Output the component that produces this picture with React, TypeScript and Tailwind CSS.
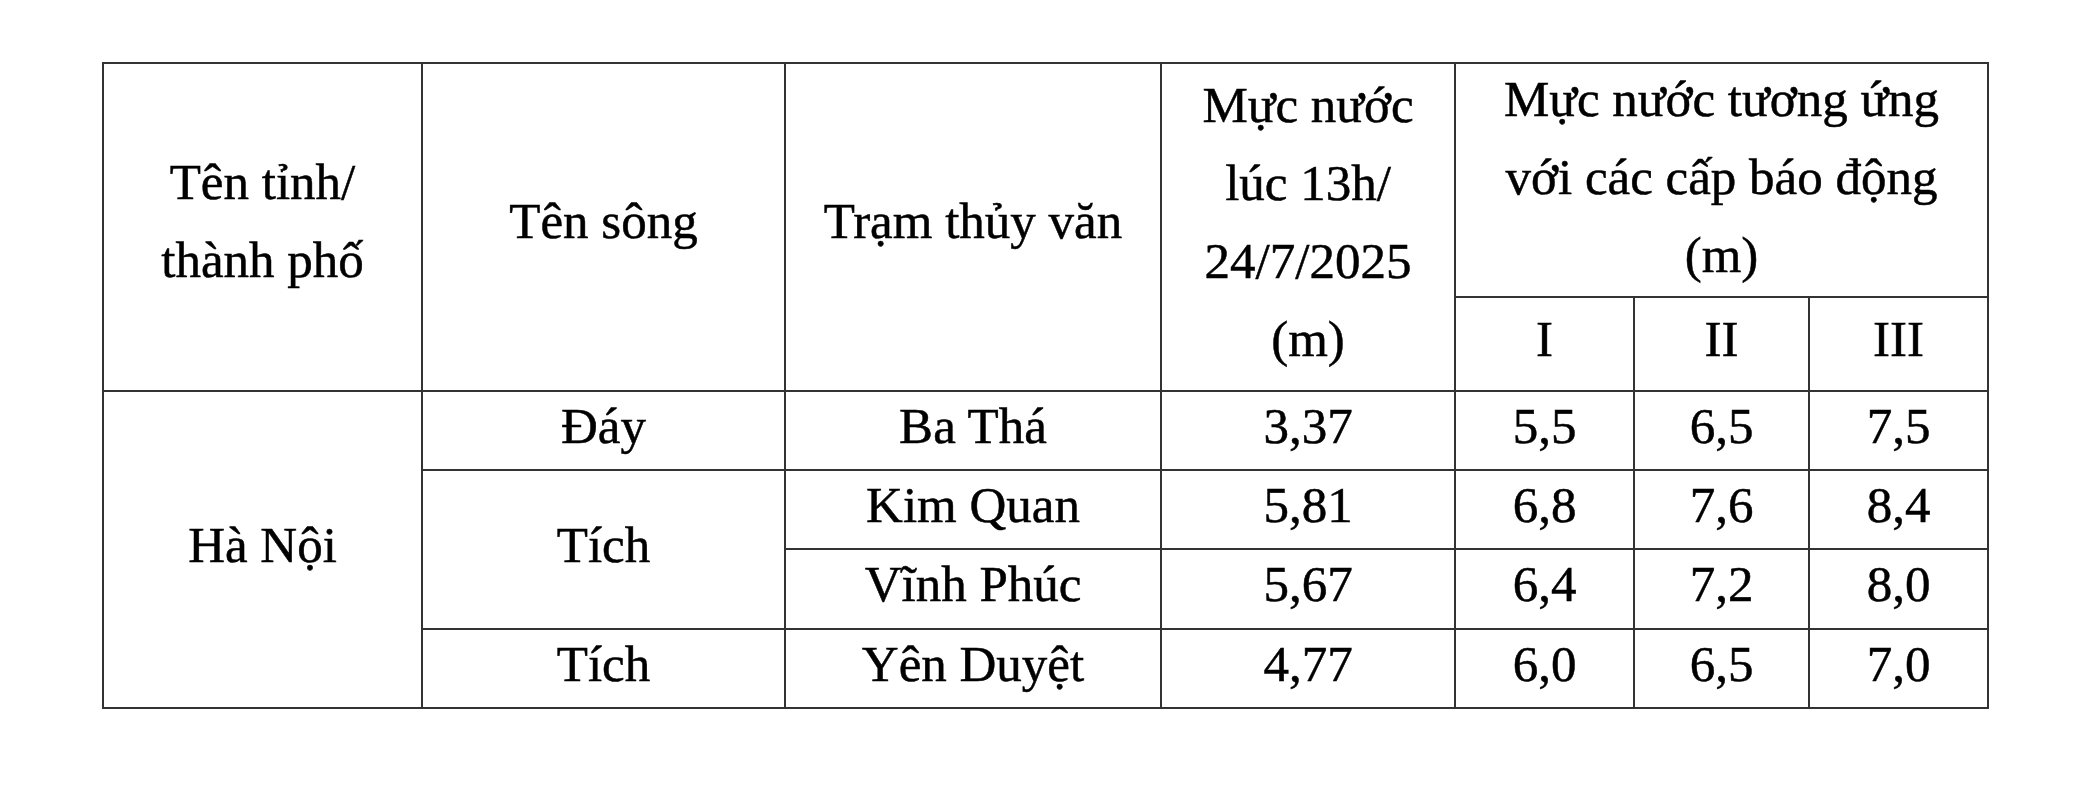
import React from "react";

const cell = "border-2 border-[#333333] text-center align-middle font-normal p-0";

const rows: { river?: { name: string; span: number }; station: string; level: string; a: string; b: string; c: string }[] = [
  { river: { name: "Đáy", span: 1 }, station: "Ba Thá", level: "3,37", a: "5,5", b: "6,5", c: "7,5" },
  { river: { name: "Tích", span: 2 }, station: "Kim Quan", level: "5,81", a: "6,8", b: "7,6", c: "8,4" },
  { station: "Vĩnh Phúc", level: "5,67", a: "6,4", b: "7,2", c: "8,0" },
  { river: { name: "Tích", span: 1 }, station: "Yên Duyệt", level: "4,77", a: "6,0", b: "6,5", c: "7,0" },
];

const heights = ["h-[79px]", "h-[79px]", "h-[80px]", "h-[79px]"];

export default function App() {
  return (
    <div className="w-[2100px] h-[789px] bg-white overflow-hidden pt-[62px] pl-[102px]">
      <table
        className="table-fixed border-collapse w-[1885px] text-black text-[51px] leading-[78px] [-webkit-text-stroke:0.5px_black]"
        style={{ fontFamily: '"Liberation Serif", "Times New Roman", serif' }}
      >
        <colgroup>
          <col className="w-[319px]" />
          <col className="w-[363px]" />
          <col className="w-[376px]" />
          <col className="w-[294px]" />
          <col className="w-[179px]" />
          <col className="w-[175px]" />
          <col className="w-[179px]" />
        </colgroup>
        <thead>
          <tr className="h-[234px]">
            <th rowSpan={2} className={cell}>
              <div className="-mt-[12px]">
                Tên tỉnh/
                <br />
                thành phố
              </div>
            </th>
            <th rowSpan={2} className={cell}>
              <div className="-mt-[12px]">Tên sông</div>
            </th>
            <th rowSpan={2} className={cell}>
              <div className="-mt-[12px]">Trạm thủy văn</div>
            </th>
            <th rowSpan={2} className={cell}>
              <div className="-mt-[10px]">
                Mực nước
                <br />
                lúc 13h/
                <br />
                24/7/2025
                <br />
                (m)
              </div>
            </th>
            <th colSpan={3} className={cell}>
              <div className="-mt-[6px]">
                Mực nước tương ứng
                <br />
                với các cấp báo động
                <br />
                (m)
              </div>
            </th>
          </tr>
          <tr className="h-[94px]">
            <th className={cell}>
              <div className="-mt-[10px]">I</div>
            </th>
            <th className={cell}>
              <div className="-mt-[10px]">II</div>
            </th>
            <th className={cell}>
              <div className="-mt-[10px]">III</div>
            </th>
          </tr>
        </thead>
        <tbody className="leading-[58px]">
          {rows.map((r, i) => (
            <tr key={i} className={heights[i]}>
              {i === 0 && (
                <td rowSpan={4} className={`${cell} pb-[10px]`}>
                  Hà Nội
                </td>
              )}
              {r.river && (
                <td rowSpan={r.river.span} className={`${cell} pb-[10px]`}>
                  {r.river.name}
                </td>
              )}
              <td className={`${cell} pb-[10px]`}>{r.station}</td>
              <td className={`${cell} pb-[10px]`}>{r.level}</td>
              <td className={`${cell} pb-[10px]`}>{r.a}</td>
              <td className={`${cell} pb-[10px]`}>{r.b}</td>
              <td className={`${cell} pb-[10px]`}>{r.c}</td>
            </tr>
          ))}
        </tbody>
      </table>
    </div>
  );
}
